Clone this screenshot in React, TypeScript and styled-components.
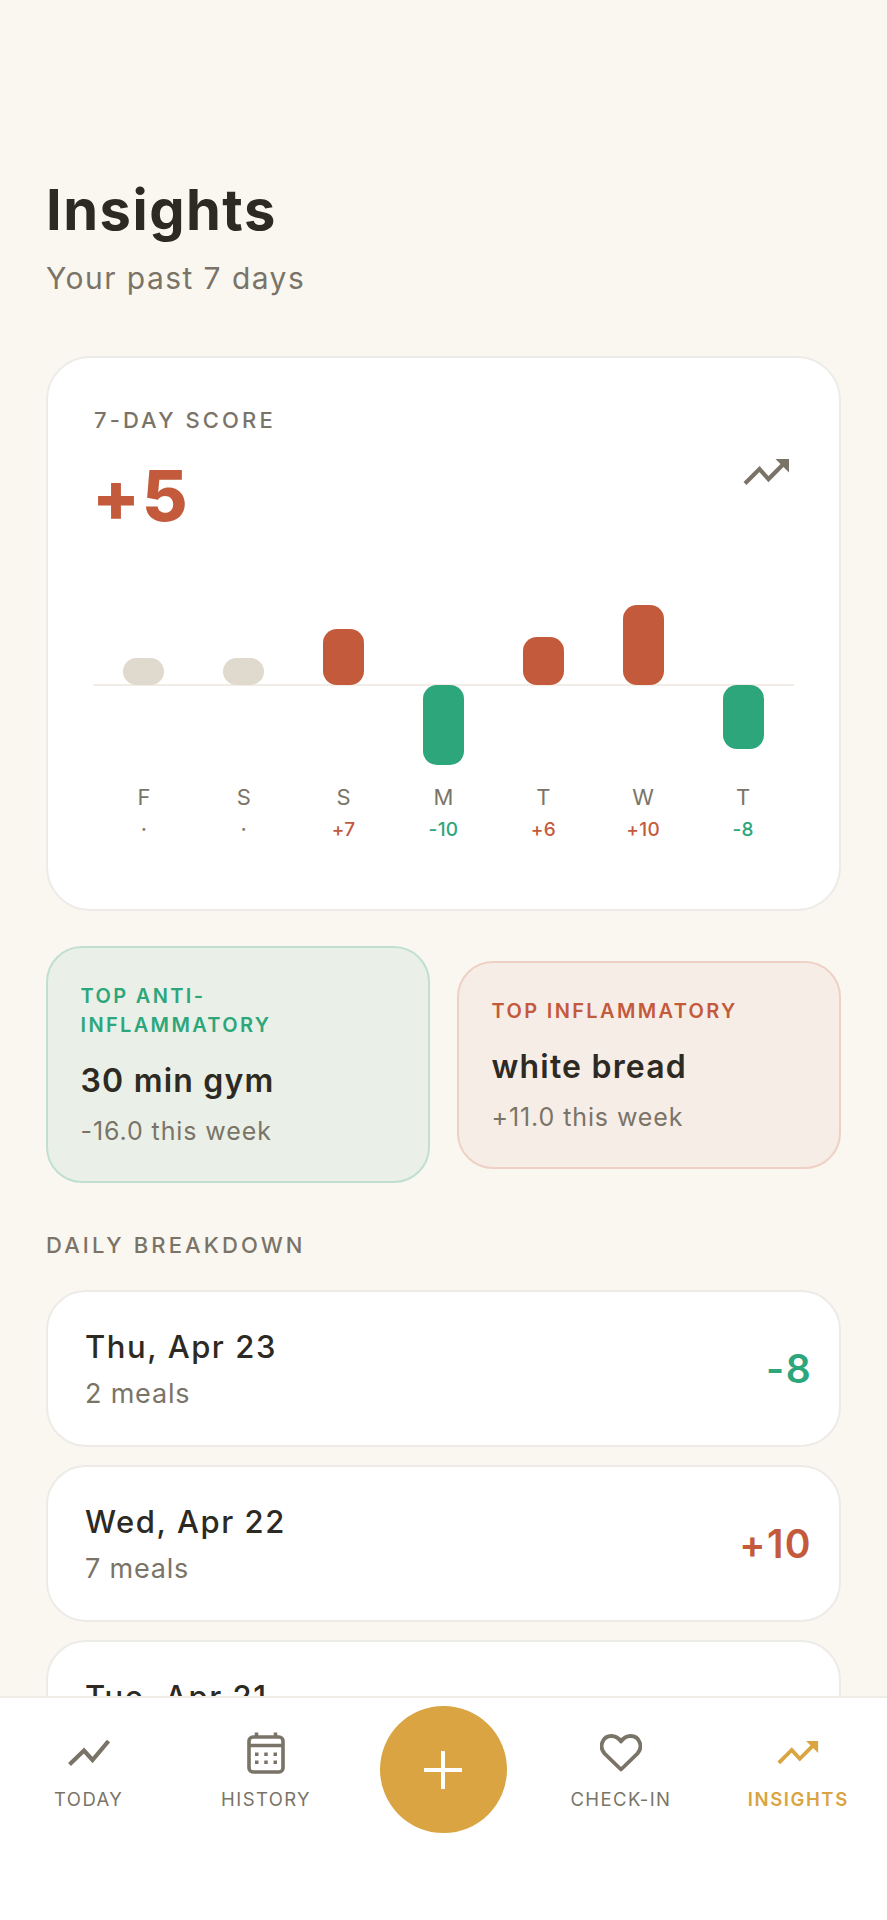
import React from 'react';
import styled, { createGlobalStyle } from 'styled-components';

const INK = '#2d2a24';
const MUTED = '#7a7468';
const RED = '#c45a3c';
const GREEN = '#2da67c';
const GOLD = '#d9a441';
const HAIR = '#ecebe7';

type Tone = 'up' | 'down' | 'none';

const toneColor = (tone: Tone) => (tone === 'up' ? RED : tone === 'down' ? GREEN : MUTED);

const GlobalStyle = createGlobalStyle`
  html, body {
    margin: 0;
    padding: 0;
    background: #faf7f0;
  }
  body {
    font-family: Inter, "Noto Sans", sans-serif;
    color: ${INK};
  }
  * {
    box-sizing: border-box;
  }
`;

const Screen = styled.div`
  position: relative;
  width: 887px;
  height: 1920px;
  overflow: hidden;
  background: #faf7f0;
`;

const Content = styled.main`
  height: 1696px;
  overflow: hidden;
  padding: 176px 46px 0;
`;

const Title = styled.h1`
  margin: 0;
  font-size: 56px;
  line-height: 68px;
  font-weight: 700;
  letter-spacing: 1.5px;
`;

const Subtitle = styled.p`
  margin: 14px 0 0;
  font-size: 30px;
  line-height: 40px;
  font-weight: 400;
  letter-spacing: 1.45px;
  color: ${MUTED};
`;

const ScoreCard = styled.section`
  margin-top: 58px;
  height: 555px;
  padding: 48px 46px 0;
  background: #fff;
  border: 2px solid ${HAIR};
  border-radius: 44px;
`;

const SmallLabel = styled.div`
  font-size: 22px;
  line-height: 28px;
  font-weight: 500;
  letter-spacing: 3.1px;
  color: ${MUTED};
`;

const ScoreRow = styled.div`
  display: flex;
  justify-content: space-between;
  align-items: flex-start;
  margin-top: 22px;
  height: 149px;
`;

const ScoreValue = styled.div`
  margin-left: -2px;
  font-size: 70px;
  line-height: 80px;
  font-weight: 800;
  letter-spacing: 2px;
  color: ${RED};
`;

const ScoreIconSlot = styled.div`
  margin: 2px 3px 0 0;
  color: ${MUTED};
`;

const BarRow = styled.div<{ $below?: boolean }>`
  display: grid;
  grid-template-columns: repeat(7, 1fr);
  height: 80px;
  justify-items: center;
  align-items: ${p => (p.$below ? 'flex-start' : 'flex-end')};
`;

const Bar = styled.div<{ $tone: Tone; $height: number }>`
  position: relative;
  width: 41px;
  height: ${p => p.$height}px;
  border-radius: 14px;
  background: ${p => (p.$tone === 'up' ? RED : p.$tone === 'down' ? GREEN : '#e0d9ce')};
`;

const Baseline = styled.div`
  height: 2px;
  margin: -1px -1px;
  background: #f1ece6;
`;

const DayGrid = styled.div`
  display: grid;
  grid-template-columns: repeat(7, 1fr);
  margin-top: 19px;
  text-align: center;
`;

const DayLetter = styled.div`
  font-size: 22px;
  line-height: 26px;
  color: ${MUTED};
`;

const DayValue = styled.div<{ $tone: Tone }>`
  margin-top: 8px;
  font-size: 19px;
  line-height: 24px;
  font-weight: 500;
  letter-spacing: 0.3px;
  color: ${p => toneColor(p.$tone)};
`;

const TopRow = styled.div`
  display: flex;
  align-items: center;
  gap: 27px;
  margin-top: 35px;
`;

const TopCard = styled.div<{ $tone: Tone }>`
  flex: 1 1 0;
  min-width: 0;
  padding: 34px 40px 33px 32.5px;
  border-radius: 36px;
  border: 2px solid ${p => (p.$tone === 'down' ? '#c0dfd0' : '#eed0c4')};
  background: ${p => (p.$tone === 'down' ? '#eaf0e7' : '#f7ede7')};
`;

const TopLabel = styled.div<{ $tone: Tone }>`
  font-size: 20px;
  line-height: 29px;
  font-weight: 600;
  letter-spacing: 2.35px;
  text-transform: uppercase;
  color: ${p => toneColor(p.$tone)};
`;

const TopName = styled.div`
  margin-top: 20px;
  font-size: 32px;
  line-height: 42px;
  font-weight: 600;
  letter-spacing: 1.2px;
`;

const TopNote = styled.div`
  margin-top: 12px;
  font-size: 25px;
  line-height: 34px;
  letter-spacing: 0.9px;
  color: ${MUTED};
`;

const SectionLabel = styled(SmallLabel)`
  margin-top: 48px;
`;

const DayList = styled.div`
  display: flex;
  flex-direction: column;
  gap: 18px;
  margin-top: 31px;
`;

const DayCard = styled.div`
  flex: none;
  display: flex;
  justify-content: space-between;
  align-items: center;
  height: 157px;
  padding: 0 27px 0 37px;
  background: #fff;
  border: 2px solid ${HAIR};
  border-radius: 40px;
`;

const DayText = styled.div`
  min-height: 87px;
  padding-top: 2px;
`;

const DayDate = styled.div`
  font-size: 31px;
  line-height: 40px;
  font-weight: 500;
  letter-spacing: 1.55px;
`;

const DayMeals = styled.div`
  margin-top: 9px;
  font-size: 27px;
  line-height: 36px;
  letter-spacing: 0.8px;
  color: ${MUTED};
`;

const DayScore = styled.div<{ $tone: Tone }>`
  font-size: 39px;
  line-height: 46px;
  font-weight: 600;
  letter-spacing: 1.4px;
  color: ${p => toneColor(p.$tone)};
`;

const BottomNav = styled.nav`
  position: absolute;
  left: 0;
  right: 0;
  bottom: 0;
  height: 224px;
  display: grid;
  grid-template-columns: repeat(5, 1fr);
  align-items: start;
  justify-items: center;
  padding-top: 8px;
  background: #fff;
  border-top: 2px solid #f0ece6;
`;

const NavItem = styled.div<{ $active?: boolean }>`
  display: flex;
  flex-direction: column;
  align-items: center;
  padding-top: 18px;
  color: ${p => (p.$active ? GOLD : MUTED)};
`;

const NavIconSlot = styled.div`
  display: flex;
  align-items: center;
  justify-content: center;
  height: 58px;
`;

const NavLabel = styled.div<{ $active?: boolean }>`
  margin-top: 5px;
  font-size: 18.5px;
  line-height: 24px;
  font-weight: ${p => (p.$active ? 600 : 400)};
  letter-spacing: ${p => (p.$active ? 1.6 : 1.4)}px;
`;

const AddButton = styled.button`
  display: flex;
  align-items: center;
  justify-content: center;
  width: 127px;
  height: 127px;
  padding: 0;
  border: none;
  border-radius: 50%;
  background: ${GOLD};
  color: #fff;
`;

const TrendArrow = ({ size = 47 }: { size?: number }) => (
  <svg width={size} height={size * 0.6} viewBox="0 0 47 28" fill="none" aria-hidden>
    <path d="M2 25.5 16.5 11 25.5 21 40 6.5" stroke="currentColor" strokeWidth="4.2" />
    <path d="M32.5 1H46V14.5Z" fill="currentColor" />
  </svg>
);

const TrendLine = () => (
  <svg width="42" height="28" viewBox="0 0 42 28" fill="none" aria-hidden>
    <path d="M1.5 25.5 16 11.5 24.5 21 40.5 2" stroke="currentColor" strokeWidth="4.2" />
  </svg>
);

const CalendarIcon = () => (
  <svg width="38" height="42" viewBox="0 0 38 42" fill="none" aria-hidden>
    <rect x="2" y="5" width="34" height="35" rx="4" stroke="currentColor" strokeWidth="3.6" />
    <path d="M2 13.5H36" stroke="currentColor" strokeWidth="3.6" />
    <path d="M9.5 0.5V6M28.5 0.5V6" stroke="currentColor" strokeWidth="3.6" />
    <path
      d="M8 20.5h3.5V24H8zM17.25 20.5h3.5V24h-3.5zM26.5 20.5H30V24h-3.5zM8 28.5h3.5V32H8zM17.25 28.5h3.5V32h-3.5zM26.5 28.5H30V32h-3.5z"
      fill="currentColor"
    />
  </svg>
);

const HeartIcon = () => (
  <svg width="42" height="38" viewBox="0 0 42 38" fill="none" aria-hidden>
    <path
      d="M21 35.5 4.6 19.6C-1.6 12.8 2.6 2 11.4 2c4.2 0 7.4 2 9.6 5.6C23.2 4 26.4 2 30.6 2c8.8 0 13 10.8 6.8 17.6Z"
      stroke="currentColor"
      strokeWidth="3.8"
      strokeLinejoin="round"
    />
  </svg>
);

const PlusIcon = () => (
  <svg width="38" height="38" viewBox="0 0 38 38" fill="none" aria-hidden>
    <path d="M19 0V38M0 19H38" stroke="currentColor" strokeWidth="4" />
  </svg>
);

const week: { day: string; value: string; tone: Tone; height: number }[] = [
  { day: 'F', value: '·', tone: 'none', height: 27 },
  { day: 'S', value: '·', tone: 'none', height: 27 },
  { day: 'S', value: '+7', tone: 'up', height: 56 },
  { day: 'M', value: '-10', tone: 'down', height: 80 },
  { day: 'T', value: '+6', tone: 'up', height: 48 },
  { day: 'W', value: '+10', tone: 'up', height: 80 },
  { day: 'T', value: '-8', tone: 'down', height: 64 },
];

// the last row runs under the nav, only the top of its date shows
const days: { date: string; meals?: string; score?: string; tone: Tone }[] = [
  { date: 'Thu, Apr 23', meals: '2 meals', score: '-8', tone: 'down' },
  { date: 'Wed, Apr 22', meals: '7 meals', score: '+10', tone: 'up' },
  { date: 'Tue, Apr 21', tone: 'up' },
];

export default function App() {
  return (
    <Screen>
      <GlobalStyle />
      <Content>
        <Title>Insights</Title>
        <Subtitle>Your past 7 days</Subtitle>

        <ScoreCard>
          <SmallLabel>7-DAY SCORE</SmallLabel>
          <ScoreRow>
            <ScoreValue>+5</ScoreValue>
            <ScoreIconSlot>
              <TrendArrow />
            </ScoreIconSlot>
          </ScoreRow>
          <BarRow>
            {week.map((d, i) => (
              <div key={i}>{d.tone !== 'down' && <Bar $tone={d.tone} $height={d.height} />}</div>
            ))}
          </BarRow>
          <Baseline />
          <BarRow $below>
            {week.map((d, i) => (
              <div key={i}>{d.tone === 'down' && <Bar $tone={d.tone} $height={d.height} />}</div>
            ))}
          </BarRow>
          <DayGrid>
            {week.map((d, i) => (
              <div key={i}>
                <DayLetter>{d.day}</DayLetter>
                <DayValue $tone={d.tone}>{d.value}</DayValue>
              </div>
            ))}
          </DayGrid>
        </ScoreCard>

        <TopRow>
          <TopCard $tone="down">
            <TopLabel $tone="down">Top anti-inflammatory</TopLabel>
            <TopName>30 min gym</TopName>
            <TopNote>-16.0 this week</TopNote>
          </TopCard>
          <TopCard $tone="up">
            <TopLabel $tone="up">Top inflammatory</TopLabel>
            <TopName>white bread</TopName>
            <TopNote>+11.0 this week</TopNote>
          </TopCard>
        </TopRow>

        <SectionLabel>DAILY BREAKDOWN</SectionLabel>
        <DayList>
          {days.map(d => (
            <DayCard key={d.date}>
              <DayText>
                <DayDate>{d.date}</DayDate>
                {d.meals && <DayMeals>{d.meals}</DayMeals>}
              </DayText>
              {d.score && <DayScore $tone={d.tone}>{d.score}</DayScore>}
            </DayCard>
          ))}
        </DayList>
      </Content>

      <BottomNav>
        <NavItem>
          <NavIconSlot>
            <TrendLine />
          </NavIconSlot>
          <NavLabel>TODAY</NavLabel>
        </NavItem>
        <NavItem>
          <NavIconSlot>
            <CalendarIcon />
          </NavIconSlot>
          <NavLabel>HISTORY</NavLabel>
        </NavItem>
        <AddButton aria-label="Add">
          <PlusIcon />
        </AddButton>
        <NavItem>
          <NavIconSlot>
            <HeartIcon />
          </NavIconSlot>
          <NavLabel>CHECK-IN</NavLabel>
        </NavItem>
        <NavItem $active>
          <NavIconSlot>
            <TrendArrow size={42} />
          </NavIconSlot>
          <NavLabel $active>INSIGHTS</NavLabel>
        </NavItem>
      </BottomNav>
    </Screen>
  );
}
